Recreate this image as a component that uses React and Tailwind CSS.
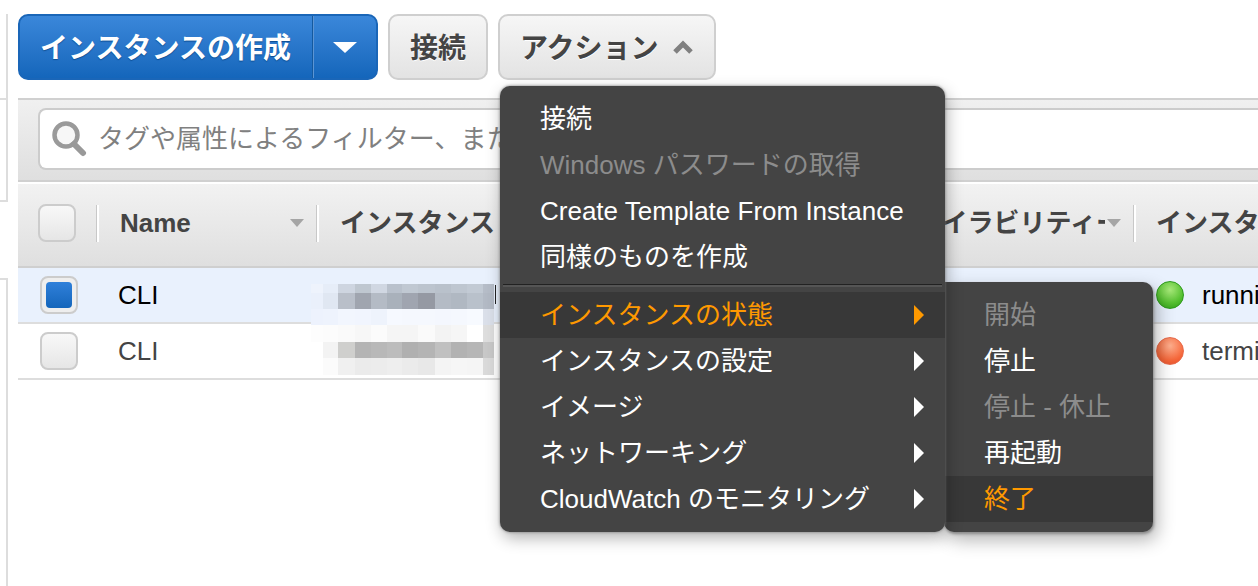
import React from 'react';

const font = { fontFamily: '"Liberation Sans", "Noto Sans CJK JP", sans-serif' };

// mosaic over the instance ids: column widths, row heights and grey values per cell
const mosaicCols = [12, 15, 17, 16, 16, 15, 16, 17, 16, 16, 16, 11];
const mosaicRows = [
  { h: 9, cells: ['#eef3fc', '#e6edf8', '#ced5e0', '#bfc7d0', '#d0d7e2', '#b9c1cc', '#c0c8d2', '#bcc4ce', '#b9c1cb', '#bec6d0', '#c2cad4', '#b6bdc8'] },
  { h: 16, cells: ['#eaf0fb', '#e0e7f2', '#b9bfc9', '#a0a5af', '#b4bbc5', '#a9b1bb', '#a0a5b0', '#9599a3', '#b4bbc5', '#b0b8c2', '#b9c1cb', '#b3bac5'] },
  { h: 16, cells: ['#edf2fd', '#eef3fd', '#f2f6fe', '#f1f5fe', '#eef3fc', '#f6f9ff', '#f5f8fe', '#f5f8fe', '#f4f7fe', '#f5f8fe', '#f7faff', '#dbe0ea'] },
  { h: 17, cells: ['#fdfdfd', '#fcfcfc', '#fafafa', '#f7f7f7', '#fbfbfb', '#f5f5f5', '#f5f5f5', '#fafafa', '#f3f3f3', '#f6f6f6', '#ffffff', '#dedede'] },
  { h: 16, cells: ['#ffffff', '#f3f3f3', '#cfcfcd', '#b4b4b4', '#b8b8b8', '#bcbcbc', '#b0b0b0', '#b4b4b4', '#c0c0c0', '#b2b2b2', '#b6b6b6', '#c8c8c8'] },
  { h: 17, cells: ['#ffffff', '#fbfbfb', '#f0f0f0', '#ebebeb', '#ececec', '#eeeeee', '#ebebeb', '#e8e8e8', '#f4f4f4', '#f6f6f6', '#f5f5f5', '#dadada'] },
];

function HeaderSep() {
  return <span className="block h-[37px] w-[3px] shrink-0 border-l border-[#c8c8c8] bg-white" />;
}

function Caret() {
  return <span className="block h-0 w-0 shrink-0 border-x-[7px] border-t-[8px] border-x-transparent border-t-[#a5a5a5]" />;
}

function MenuItem({ label, state, arrow }) {
  const color = state === 'active' ? 'text-[#ff9900]' : state === 'disabled' ? 'text-[#8c8c8c]' : 'text-white';
  return (
    <div className={`flex h-[46px] items-center justify-between pl-10 pr-[21px] text-[26px] whitespace-nowrap ${color} ${state === 'active' ? 'bg-[#383838]' : ''}`}>
      <span>{label}</span>
      {arrow && (
        <span className={`h-0 w-0 border-y-[10px] border-l-[10px] border-y-transparent ${state === 'active' ? 'border-l-[#ff9900]' : 'border-l-white'}`} />
      )}
    </div>
  );
}

export default function App() {
  return (
    <div className="relative h-[586px] w-[1258px] overflow-hidden bg-white" style={font}>
      {/* cut-off side panel */}
      <div className="absolute left-0 top-[14px] h-[86px] w-[8px] border-r-2 border-b-2 border-[#dddddd]" />
      <div className="absolute left-0 top-[100px] h-[102px] w-[8px] border-r-2 border-b-2 border-[#dddddd]" />
      <div className="absolute left-0 top-[278px] h-[308px] w-[8px] border-r-2 border-t-2 border-[#dddddd]" />

      <div className="pl-[18px] pt-[14px]">
        {/* toolbar */}
        <div className="flex h-[66px] gap-[10px]">
          <div className="flex w-[360px] rounded-[10px] border-2 border-[#1a66b8] bg-gradient-to-b from-[#3a87da] to-[#1466bb] text-white">
            <div className="flex w-[292px] items-center pl-[20px] pt-1 text-[28px] font-bold whitespace-nowrap [text-shadow:0_1px_1px_#0b4c91]">インスタンスの作成</div>
            <span className="w-[2px] border-l border-[#14599f] bg-[#5c95d4]" />
            <div className="flex flex-1 items-center justify-center pr-[1px]">
              <span className="h-0 w-0 border-x-[12px] border-t-[11px] border-x-transparent border-t-white" />
            </div>
          </div>
          <div className="flex w-[100px] items-center justify-center rounded-[10px] border-2 border-[#cfcfcf] bg-gradient-to-b from-[#f6f6f6] to-[#e3e3e3] pt-1 text-[28px] font-bold text-[#444444] [text-shadow:0_1px_0_#ffffff]">接続</div>
          <div className="flex w-[218px] items-center gap-[14px] rounded-[10px] border-2 border-[#cfcfcf] bg-gradient-to-b from-[#f6f6f6] to-[#e3e3e3] pl-[20px] pt-1 text-[28px] font-bold whitespace-nowrap text-[#444444] [text-shadow:0_1px_0_#ffffff]">
            アクション
            <svg className="mb-1" width="20" height="14" viewBox="0 0 20 14"><path d="M2 12 L10 4 L18 12" fill="none" stroke="#808080" strokeWidth="5" /></svg>
          </div>
        </div>

        {/* filter band */}
        <div className="mt-[18px] h-[84px] border-y-2 border-[#d0d0d0] bg-gradient-to-b from-[#f0f0f0] to-[#dfdfdf] pl-5 pt-2">
          <div className="flex h-[62px] items-center gap-[11px] overflow-hidden rounded-l-[8px] border-2 border-r-0 border-[#cccccc] bg-white pl-[11px] text-[26px] whitespace-nowrap text-[#808080]">
            <svg className="shrink-0" width="36" height="38" viewBox="0 0 36 38">
              <circle cx="15" cy="15" r="11.5" fill="#f7f7f7" stroke="#9a9a9a" strokeWidth="4.5" />
              <path d="M23 24 L32 33" stroke="#999999" strokeWidth="6" strokeLinecap="round" />
            </svg>
            タグや属性によるフィルター、またはキーワードによる検索
          </div>
        </div>

        {/* table */}
        <div className="mt-[2px] text-[26px]">
          <div className="flex h-[84px] items-center border-b-2 border-[#cfcfcf] bg-gradient-to-b from-[#f2f2f2] to-[#dfdfdf] pb-1 font-bold text-[#444444]">
            <div className="flex w-[82px] shrink-0 items-center">
              <span className="ml-5 h-[38px] w-[38px] rounded-[8px] border-2 border-[#cccccc] bg-gradient-to-b from-[#f8f8f8] to-[#e6e6e6]" />
              <span className="ml-[20px]"><HeaderSep /></span>
            </div>
            <div className="flex w-[219px] shrink-0 items-center justify-between pl-[20px]">
              <span>Name</span>
              <span className="flex items-center gap-[12px]"><Caret /><HeaderSep /></span>
            </div>
            <div className="w-[571px] shrink-0 pl-[21px] whitespace-nowrap">インスタンス ID</div>
            <div className="flex w-[246px] shrink-0 items-center">
              <span className="w-[215px] shrink-0 overflow-hidden whitespace-nowrap">アベイラビリティーゾーン</span>
              <span className="ml-[2px]"><Caret /></span>
              <span className="ml-[12px]"><HeaderSep /></span>
            </div>
            <div className="flex-1 pl-[20px] whitespace-nowrap">インスタンスの状態</div>
          </div>

          <div className="flex h-[56px] items-center border-b-2 border-[#dddddd] bg-[#e9f1fd] text-black">
            <div className="w-[80px] shrink-0 pl-[22px]">
              <span className="flex h-[38px] w-[38px] items-center justify-center rounded-[8px] border-2 border-[#cccccc] bg-[#eeeeee]">
                <span className="h-[26px] w-[26px] rounded-[4px] bg-gradient-to-b from-[#2f80da] to-[#1466bb]" />
              </span>
            </div>
            <div className="w-[1058px] shrink-0 pl-[20px]">CLI</div>
            <div className="flex items-center gap-[18px] whitespace-nowrap">
              <span className="h-[28px] w-[28px] shrink-0 rounded-full border border-[#2d9a1c] bg-[radial-gradient(circle_at_50%_30%,#a8e87a,#55c030_60%,#2a9a15)]" />
              running
            </div>
          </div>
          <div className="flex h-[56px] items-center border-b-2 border-[#dddddd] bg-white text-[#444444]">
            <div className="w-[80px] shrink-0 pl-[22px]">
              <span className="block h-[38px] w-[38px] rounded-[8px] border-2 border-[#cccccc] bg-gradient-to-b from-[#f8f8f8] to-[#e6e6e6]" />
            </div>
            <div className="w-[1058px] shrink-0 pl-[20px]">CLI</div>
            <div className="flex items-center gap-[18px] whitespace-nowrap">
              <span className="h-[28px] w-[28px] shrink-0 rounded-full border border-[#e86a4a] bg-[radial-gradient(circle_at_50%_30%,#ffb08f,#f5673a_65%,#e24a26)]" />
              terminated
            </div>
          </div>
        </div>
      </div>

      {/* blurred instance ids */}
      <div className="absolute left-[311px] top-[284px]">
        {mosaicRows.map((row, r) => (
          <div key={r} className="flex">
            {row.cells.map((c, i) => (
              <span key={i} style={{ width: mosaicCols[i], height: row.h, background: c }} />
            ))}
          </div>
        ))}
      </div>
      <span className="absolute left-[495px] top-[285px] h-[19px] w-[1px] bg-[#222222]" />

      {/* sub menu */}
      <div className="absolute left-[944px] top-[282px] w-[209px] rounded-[10px] rounded-tl-none bg-[#444444] py-[10px] shadow-[1px_2px_3px_#8a8a8a,4px_8px_18px_rgba(0,0,0,0.3)]">
        <MenuItem label="開始" state="disabled" />
        <MenuItem label="停止" />
        <MenuItem label="停止 - 休止" state="disabled" />
        <MenuItem label="再起動" />
        <MenuItem label="終了" state="active" />
      </div>

      {/* actions menu */}
      <div className="absolute left-[500px] top-[86px] w-[445px] rounded-[10px] bg-[#444444] py-[10px] shadow-[0_0_3px_#777777,2px_6px_16px_rgba(0,0,0,0.3)]">
        <MenuItem label="接続" />
        <MenuItem label="Windows パスワードの取得" state="disabled" />
        <MenuItem label="Create Template From Instance" />
        <MenuItem label="同様のものを作成" />
        <div className="mx-[3px] mb-[5px] mt-[4px] h-[3px] border-t border-[#222222] bg-[#555555]" />
        <MenuItem label="インスタンスの状態" state="active" arrow />
        <MenuItem label="インスタンスの設定" arrow />
        <MenuItem label="イメージ" arrow />
        <MenuItem label="ネットワーキング" arrow />
        <MenuItem label="CloudWatch のモニタリング" arrow />
      </div>
    </div>
  );
}
